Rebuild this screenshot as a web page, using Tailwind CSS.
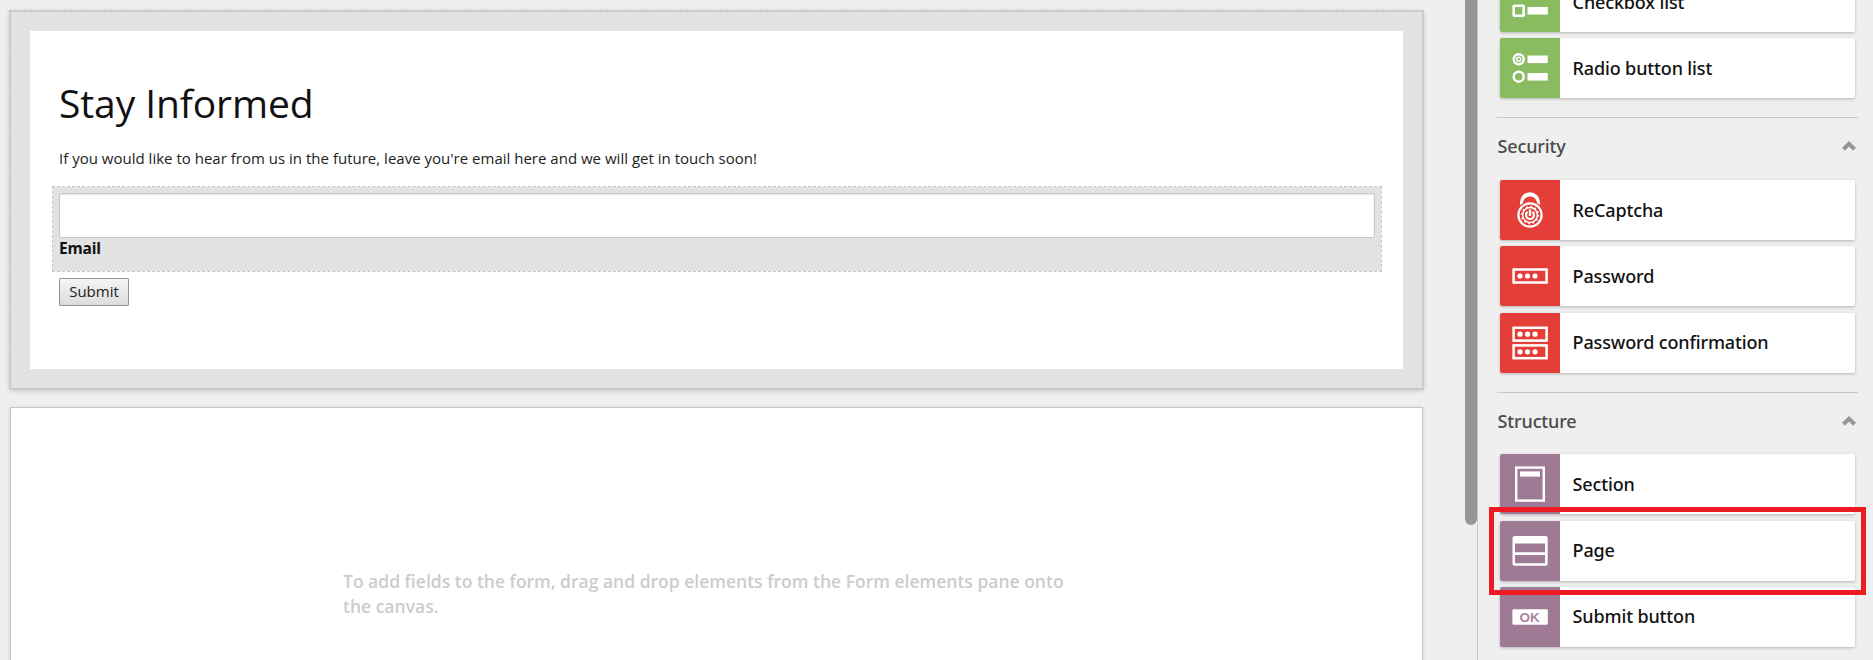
<!DOCTYPE html>
<html lang="en">
<head>
<meta charset="utf-8">
<title>Form builder</title>
<script src="https://cdn.jsdelivr.net/npm/@tailwindcss/browser@4"></script>
</head>
<body class="h-[660px] overflow-hidden bg-[#efefef] font-['Open_Sans',sans-serif] text-[#111]">
<div class="relative flex h-[660px] w-[1873px] overflow-hidden">
  <main class="flex w-[1465px] shrink-0 flex-col pt-[11px] pl-[10px]">
    <section class="h-[378px] w-[1413px] shrink-0 border border-[#c8c8c8] bg-[#e2e2e2] p-[19px] shadow-[0_1px_5px_rgba(0,0,0,0.25)] outline-1 outline-dashed outline-[#c8c8c8]">
      <div class="h-[338px] bg-white pt-[46px] pr-[21px] pl-[22px]">
        <h1 class="pl-[7px] text-[39px] leading-[52px] font-normal tracking-[-0.1px]">Stay Informed</h1>
        <p class="mt-[19px] pl-[7px] text-[15px] leading-5 tracking-[0.01px] text-[#222]">If you would like to hear from us in the future, leave you're email here and we will get in touch soon!</p>
        <div class="mt-[18px] h-[86px] border border-dashed border-[#c4c4c4] bg-[#e2e2e2] bg-clip-padding px-[6px] pt-[6px]">
          <div class="h-[45px] rounded-[2px] border border-[#c8c8c8] bg-white shadow-[inset_0_1px_2px_rgba(0,0,0,0.1)]"></div>
          <label class="block text-[15.5px] leading-5 font-bold tracking-[-0.2px]">Email</label>
        </div>
        <button class="mt-[6px] ml-[7px] flex h-7 w-[70px] items-center justify-center rounded-[1px] border border-[#959595] bg-linear-to-b from-[#f5f5f5] to-[#dcdcdc] pb-[3px] text-[15px] leading-5 text-[#222]">Submit</button>
      </div>
    </section>
    <section class="mt-[18px] h-[400px] w-[1413px] shrink-0 border border-[#c8c8c8] bg-white pt-[161px] pl-[332px] shadow-[0_1px_4px_rgba(0,0,0,0.15)]">
      <p class="w-[740px] text-[17.5px] leading-[25px] font-semibold text-[#ccc]">To add fields to the form, drag and drop elements from the Form elements pane onto<br>the canvas.</p>
    </section>
  </main>

  <div class="h-[525px] w-3 shrink-0 rounded-b-full bg-[#969696]"></div>

  <aside class="h-[660px] w-[396px] shrink-0 overflow-hidden border-l border-[#c8c8c8] pr-[15px] pl-[19px] font-['Noto_Sans',sans-serif] text-[18px] leading-6 font-medium tracking-[-0.14px]">
    <div class="-mt-7 flex w-[361px] flex-col gap-[6px] border-b border-[#c8c8c8] pb-[19px] pl-[3px]">
      <div class="flex h-[60px] w-[355px] items-center overflow-hidden rounded-[2px] bg-white shadow-[0_1px_3px_rgba(0,0,0,0.25)]">
        <svg class="h-[60px] w-[60px] shrink-0 bg-[#89bb61]" viewBox="0 0 60 60" fill="#fff"><rect x="13.7" y="33.7" width="10" height="10" rx=".5" fill="none" stroke="#fff" stroke-width="2.6"/><rect x="27.5" y="35" width="20.3" height="7.6"/></svg>
        <span class="pl-[12.6px]">Checkbox list</span>
      </div>
      <div class="flex h-[60px] w-[355px] items-center overflow-hidden rounded-[2px] bg-white shadow-[0_1px_3px_rgba(0,0,0,0.25)]">
        <svg class="h-[60px] w-[60px] shrink-0 bg-[#89bb61]" viewBox="0 0 60 60" fill="#fff"><g fill="none" stroke="#fff"><circle cx="18.7" cy="21.3" r="5" stroke-width="2.5"/><circle cx="18.7" cy="21.3" r="2" stroke-width="1.5"/><circle cx="18.7" cy="38.7" r="5" stroke-width="2.5"/></g><rect x="27.5" y="17.5" width="20.3" height="7.6"/><rect x="27.5" y="35" width="20.3" height="7.6"/></svg>
        <span class="pl-[12.6px]">Radio button list</span>
      </div>
    </div>

    <div class="flex h-[62px] w-[361px] items-center justify-between pr-[2px] pb-[6px] pl-[0.5px] text-[#4a4a4a]">
      <h2>Security</h2>
      <svg class="h-[10px] w-[14px]" viewBox="0 0 14 10" fill="none" stroke="#969696" stroke-width="4"><path d="M1.4 8.3 7 2.8l5.6 5.5"/></svg>
    </div>
    <div class="flex w-[361px] flex-col border-b border-[#c8c8c8] pb-[19px] pl-[3px]">
      <div class="flex h-[60px] w-[355px] items-center overflow-hidden rounded-[2px] bg-white shadow-[0_1px_3px_rgba(0,0,0,0.25)]">
        <svg class="h-[60px] w-[60px] shrink-0 bg-[#e33e38]" viewBox="0 0 60 60" fill="none" stroke="#fff"><path d="M20 25v-3a10 9.700 0 0 1 20 0v3l-2.800-1.800c-.8-4-3.200-6.700-7.200-6.700s-6.400 2.700-7.200 6.700z" fill="#fff" stroke="none"/><circle cx="30" cy="35" r="12.600" fill="#e33e38" stroke="none"/><circle cx="30" cy="35" r="11.600" stroke-width="2.200"/><circle cx="30" cy="35" r="7.400" stroke-width="1.500"/><circle cx="30" cy="35" r="8.400" stroke-width="1.500" stroke-dasharray="1.700 2.698"/><path d="M27.500 31.900a4 4 0 1 0 5 0" stroke-width="2.200"/><path d="M30 29.500v6.500" stroke-width="2.400"/></svg>
        <span class="pl-[12.6px]">ReCaptcha</span>
      </div>
      <div class="mt-[6px] flex h-[60px] w-[355px] items-center overflow-hidden rounded-[2px] bg-white shadow-[0_1px_3px_rgba(0,0,0,0.25)]">
        <svg class="h-[60px] w-[60px] shrink-0 bg-[#e33e38]" viewBox="0 0 60 60" fill="#fff"><rect x="13.600" y="23.500" width="33" height="13" fill="none" stroke="#fff" stroke-width="2.500"/><circle cx="20" cy="30" r="2.600"/><circle cx="27.500" cy="30" r="2.600"/><circle cx="35" cy="30" r="2.600"/></svg>
        <span class="pl-[12.6px]">Password</span>
      </div>
      <div class="mt-[7px] flex h-[60px] w-[355px] items-center overflow-hidden rounded-[2px] bg-white shadow-[0_1px_3px_rgba(0,0,0,0.25)]">
        <svg class="h-[60px] w-[60px] shrink-0 bg-[#e33e38]" viewBox="0 0 60 60" fill="#fff"><g fill="none" stroke="#fff" stroke-width="2.500"><rect x="13.600" y="14.800" width="33" height="12.800"/><rect x="13.600" y="32.400" width="33" height="12.800"/></g><circle cx="20" cy="21.200" r="2.600"/><circle cx="27.500" cy="21.200" r="2.600"/><circle cx="35" cy="21.200" r="2.600"/><circle cx="20" cy="38.800" r="2.600"/><circle cx="27.500" cy="38.800" r="2.600"/><circle cx="35" cy="38.800" r="2.600"/></svg>
        <span class="pb-[2px] pl-[12.6px]">Password confirmation</span>
      </div>
    </div>

    <div class="flex h-[61px] w-[361px] items-center justify-between pr-[2px] pb-[6px] pl-[0.5px] text-[#4a4a4a]">
      <h2>Structure</h2>
      <svg class="h-[10px] w-[14px]" viewBox="0 0 14 10" fill="none" stroke="#969696" stroke-width="4"><path d="M1.4 8.3 7 2.8l5.6 5.5"/></svg>
    </div>
    <div class="flex w-[361px] flex-col pl-[3px]">
      <div class="flex h-[60px] w-[355px] items-center overflow-hidden rounded-[2px] bg-white shadow-[0_1px_3px_rgba(0,0,0,0.25)]">
        <svg class="h-[60px] w-[60px] shrink-0 bg-[#9f7a94]" viewBox="0 0 60 60" fill="#fff"><rect x="16.200" y="13.600" width="27.600" height="33" fill="none" stroke="#fff" stroke-width="2.400"/><rect x="20" y="17.400" width="20" height="5.200"/></svg>
        <span class="pl-[12.6px]">Section</span>
      </div>
      <div class="mt-[7px] flex h-[60px] w-[355px] items-center overflow-hidden rounded-[2px] bg-white shadow-[0_1px_3px_rgba(0,0,0,0.25)]">
        <svg class="h-[60px] w-[60px] shrink-0 bg-[#9f7a94]" viewBox="0 0 60 60" fill="#fff"><path fill-rule="evenodd" d="M14 15h32.200l1.500 1.500V43.200l-1.500 1.500H14l-1.500-1.500V16.500zM15 22.400v8.800h30v-8.800zM15 34v8.300h30V34z"/></svg>
        <span class="pb-[2px] pl-[12.6px]">Page</span>
      </div>
      <div class="mt-[6px] flex h-[60px] w-[355px] items-center overflow-hidden rounded-[2px] bg-white shadow-[0_1px_3px_rgba(0,0,0,0.25)]">
        <svg class="h-[60px] w-[60px] shrink-0 bg-[#9f7a94]" viewBox="0 0 60 60"><rect x="12.400" y="22.300" width="35.400" height="15.400" rx="1.200" fill="#fff"/><text x="29.700" y="34.600" text-anchor="middle" class="fill-[#a985a0] font-['Liberation_Sans',sans-serif] text-[13.5px] font-bold tracking-normal">OK</text></svg>
        <span class="pb-[2px] pl-[12.6px]">Submit button</span>
      </div>
    </div>
  </aside>

  <div class="absolute top-[507px] left-[1489px] h-[88px] w-[377px] border-5 border-[#ed1c24]"></div>
</div>
</body>
</html>
